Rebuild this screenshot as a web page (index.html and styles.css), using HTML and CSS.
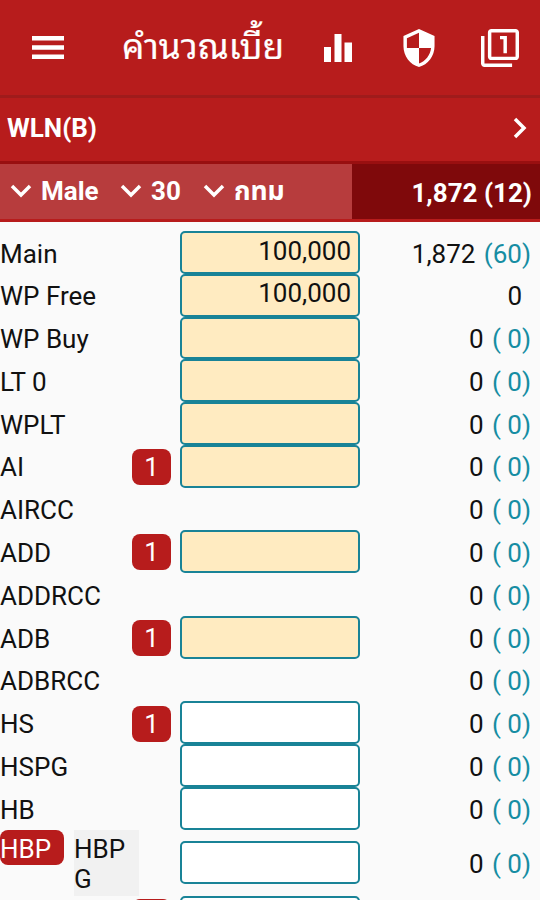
FILE: index.html
```html
<!DOCTYPE html>
<html lang="th">
<head>
    <meta charset="UTF-8">
    <meta name="viewport" content="width=device-width, initial-scale=1.0">
    <title>คำนวณเบี้ย</title>
    <link rel="stylesheet" href="styles.css">
</head>
<body>
    <header class="toolbar">
        <svg class="menu" viewBox="0 0 32 24"><path d="M0 0h32v4.500H0zM0 9.300h32v4.500H0zM0 18.500h32v4.500H0z"/></svg>
        <h1 class="title">คำนวณเบี้ย</h1>
        <svg class="chart" viewBox="0 0 28 28"><path d="M0 13h7v15H0zM10.500 0h7v28h-7zM20.500 8.500H28V28h-7.500z"/></svg>
        <svg class="shield" viewBox="3 1 18 22"><path d="M12 1 3 5v6c0 5.550 3.840 10.740 9 12 5.160-1.260 9-6.450 9-12V5l-9-4zm0 10.990h7c-.53 4.120-3.280 7.790-7 8.940V12H5V6.300l7-3.110v8.800z"/></svg>
        <svg class="pages" viewBox="1 1 22 22"><path d="M3 5H1v16c0 1.100.9 2 2 2h16v-2H3V5zm11 10h2V5h-4v2h2v8zm7-14H7c-1.100 0-2 .9-2 2v14c0 1.100.9 2 2 2h14c1.100 0 2-.9 2-2V3c0-1.100-.9-2-2-2zm0 16H7V3h14v14z"/></svg>
    </header>
    <div class="plan">
        <span>WLN(B)</span>
        <svg class="next" viewBox="0 0 14 22"><path d="m2 2 9 9-9 9"/></svg>
    </div>
    <div class="summary">
        <div class="filters">
            <div class="filter gender"><svg viewBox="0 0 22 14"><path d="m2 2 9 9 9-9"/></svg>Male</div>
            <div class="filter age"><svg viewBox="0 0 22 14"><path d="m2 2 9 9 9-9"/></svg>30</div>
            <div class="filter"><svg viewBox="0 0 22 14"><path d="m2 2 9 9 9-9"/></svg><span class="area">กทม</span></div>
        </div>
        <div class="total">1,872 (12)</div>
    </div>
    <main class="riders">
        <div class="row"><div class="label">Main</div><div class="field filled">100,000</div><div class="value">1,872 <span>(60)</span></div></div>
        <div class="row"><div class="label">WP Free</div><div class="field filled">100,000</div><div class="value free">0</div></div>
        <div class="row"><div class="label">WP Buy</div><div class="field filled"></div><div class="value">0 <span>( 0)</span></div></div>
        <div class="row"><div class="label">LT 0</div><div class="field filled"></div><div class="value">0 <span>( 0)</span></div></div>
        <div class="row"><div class="label">WPLT</div><div class="field filled"></div><div class="value">0 <span>( 0)</span></div></div>
        <div class="row"><div class="label">AI <b class="badge">1</b></div><div class="field filled"></div><div class="value">0 <span>( 0)</span></div></div>
        <div class="row"><div class="label">AIRCC</div><div></div><div class="value">0 <span>( 0)</span></div></div>
        <div class="row"><div class="label">ADD <b class="badge">1</b></div><div class="field filled"></div><div class="value">0 <span>( 0)</span></div></div>
        <div class="row"><div class="label">ADDRCC</div><div></div><div class="value">0 <span>( 0)</span></div></div>
        <div class="row"><div class="label">ADB <b class="badge">1</b></div><div class="field filled"></div><div class="value">0 <span>( 0)</span></div></div>
        <div class="row"><div class="label">ADBRCC</div><div></div><div class="value">0 <span>( 0)</span></div></div>
        <div class="row"><div class="label">HS <b class="badge">1</b></div><div class="field"></div><div class="value">0 <span>( 0)</span></div></div>
        <div class="row"><div class="label">HSPG</div><div class="field"></div><div class="value">0 <span>( 0)</span></div></div>
        <div class="row"><div class="label">HB</div><div class="field"></div><div class="value">0 <span>( 0)</span></div></div>
        <div class="row tall">
            <div class="label options"><div class="option active">HBP</div><div class="option">HBP<br>G</div></div>
            <div class="field"></div>
            <div class="value">0 <span>( 0)</span></div>
        </div>
        <div class="row last"><div class="label"><b class="badge"></b></div><div class="field"></div><div class="value"></div></div>
    </main>
</body>
</html>
```
FILE: styles.css
```css
* {
    box-sizing: border-box;
}
body {
    margin: 0;
    height: 900px;
    overflow: hidden;
    background-color: #fafafa;
    color: #111;
    font-family: Roboto, "Noto Sans Thai", sans-serif;
    font-size: 26px;
    line-height: 30px;
}
svg {
    display: block;
    flex: none;
    fill: #fff;
}
.toolbar {
    display: flex;
    align-items: center;
    height: 95px;
    padding: 0 21px 0 32px;
    background-color: #b71c1c;
    color: #fff;
}
.menu {
    width: 32px;
    height: 24px;
}
.title {
    flex: 1;
    margin: 0 0 10px 58px;
    font-family: "Noto Sans Thai Looped", "Noto Looped Thai", Loma, Waree, Garuda, Roboto, sans-serif;
    font-size: 35.2px;
    font-weight: 400;
    line-height: 48px;
    white-space: nowrap;
    -webkit-text-stroke: 0.2px #fff;
}
.chart {
    width: 28px;
    height: 28px;
    margin-right: 51px;
}
.shield {
    width: 32px;
    height: 38px;
    margin-right: 46px;
}
.pages {
    width: 38px;
    height: 38px;
}
.plan {
    display: flex;
    justify-content: space-between;
    align-items: center;
    height: 69px;
    padding: 0 13px 3px 7px;
    border-top: 3px solid #9f1b1b;
    border-bottom: 3px solid #990f10;
    background-color: #b71c1c;
    color: #fff;
    font-weight: 700;
}
.next {
    width: 14px;
    height: 22px;
}
.next path,
.filter path {
    fill: none;
    stroke: #fff;
    stroke-width: 3.5;
}
.summary {
    display: flex;
    height: 58px;
    border-bottom: 3px solid #b71c1c;
    color: #fff;
    font-weight: 700;
}
.filters {
    display: flex;
    align-items: center;
    width: 352px;
    padding: 0 0 2px 10px;
    background-color: #b73c3d;
}
.filter {
    display: flex;
    align-items: center;
    gap: 9px;
}
.filter svg {
    width: 22px;
    height: 14px;
}
.gender {
    width: 110px;
}
.age {
    width: 83px;
}
.area {
    font-size: 26.5px;
}
.total {
    flex: 1;
    padding: 14px 8px 0 0;
    background-color: #7f090b;
    text-align: right;
}
.riders {
    padding-top: 9px;
}
.row {
    display: grid;
    grid-template-columns: 180px 180px 1fr;
    align-items: center;
    height: 42.78px;
}
.label {
    display: flex;
    align-items: center;
    justify-content: space-between;
    padding: 2.5px 9px 0 0;
}
.badge {
    width: 39px;
    height: 36px;
    margin: -1px 0 0 auto;
    border-radius: 8px;
    background-color: #b71c1c;
    color: #fff;
    font-weight: 400;
    line-height: 37px;
    text-align: center;
}
.last .badge {
    margin-top: -2px;
}
.field {
    height: 42.78px;
    padding: 2.5px 7px 0 0;
    border: 2px solid #198397;
    border-radius: 5px;
    background-color: #fff;
    text-align: right;
}
.filled {
    background-color: #ffebc1;
}
.value {
    padding: 2.5px 9px 0 0;
    text-align: right;
}
.value span {
    margin-left: 2px;
    color: #168da3;
}
.free {
    padding-right: 18px;
}
.tall {
    height: 66px;
}
.options {
    align-self: start;
    align-items: flex-start;
    justify-content: flex-start;
    gap: 10px;
    padding: 0;
}
.option {
    width: 65px;
    height: 66px;
    padding-top: 4px;
    background-color: #f1f1f1;
}
.active {
    width: 64px;
    height: 35px;
    border-radius: 8px;
    background-color: #b71c1c;
    color: #fff;
}
```
